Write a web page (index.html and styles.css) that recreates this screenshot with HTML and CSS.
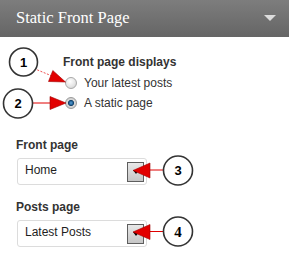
FILE: index.html
```html
<!DOCTYPE html>
<html>
<head>
<meta charset="utf-8">
<link rel="stylesheet" href="styles.css">
</head>
<body>
<div class="page">
  <header class="head">
    <h1 class="title">Static Front Page</h1>
    <span class="caret"></span>
  </header>
  <main class="content">
    <div class="group">
      <div class="group-title">Front page displays</div>
      <div class="options">
        <div class="radio-row"><span class="radio"></span><span>Your latest posts</span></div>
        <div class="radio-row"><span class="radio checked"></span><span>A static page</span></div>
      </div>
    </div>
    <div class="field field-front">
      <div class="label">Front page</div>
      <div class="select"><span class="value">Home</span><span class="btn"></span></div>
    </div>
    <div class="field field-posts">
      <div class="label">Posts page</div>
      <div class="select"><span class="value">Latest Posts</span><span class="btn"></span></div>
    </div>
  </main>
  <svg class="notes" width="289" height="271" viewBox="0 0 289 271">
    <!-- callout 1 -->
    <line x1="34" y1="68.5" x2="52" y2="76" class="lead dotted"/>
    <polygon points="65.5,82 48.5,81.5 52.8,70.5" class="head-arrow"/>
    <circle cx="23.5" cy="62" r="14" class="bubble"/>
    <text x="23.5" y="66.7" class="num">1</text>
    <!-- callout 2 -->
    <line x1="32.5" y1="103" x2="51" y2="103" class="lead"/>
    <polygon points="66,103 50,96.5 50,109.5" class="head-arrow"/>
    <circle cx="18" cy="103.5" r="14.5" class="bubble"/>
    <text x="18" y="108.2" class="num">2</text>
    <!-- callout 3 -->
    <line x1="149" y1="170" x2="164" y2="170" class="lead"/>
    <polygon points="133,170.5 150,163 150,178" class="head-arrow"/>
    <circle cx="178" cy="170.5" r="14.5" class="bubble"/>
    <text x="178" y="175.2" class="num">3</text>
    <!-- callout 4 -->
    <line x1="149" y1="231.5" x2="164" y2="231.5" class="lead"/>
    <polygon points="133,232 150,224.5 150,239.5" class="head-arrow"/>
    <circle cx="178" cy="231.5" r="14.5" class="bubble"/>
    <text x="178" y="236.5" class="num serif">4</text>
  </svg>
</div>
</body>
</html>
```

FILE: styles.css
```css
html, body {
  margin: 0;
  padding: 0;
  background: #ffffff;
}

body {
  font-family: "Liberation Sans", Arial, sans-serif;
  color: #333333;
}

.page {
  position: relative;
  width: 289px;
  height: 271px;
  overflow: hidden;
  background: #ffffff;
}

.head {
  box-sizing: border-box;
  height: 37px;
  padding: 9px 13px 0 16px;
  display: flex;
  justify-content: space-between;
  align-items: flex-start;
  background: linear-gradient(#7d7d7d, #656565);
}

.title {
  margin: 0;
  font-family: "Liberation Serif", "Times New Roman", serif;
  font-weight: normal;
  font-size: 16.5px;
  line-height: 18px;
  color: #ffffff;
}

.caret {
  width: 0;
  height: 0;
  margin-top: 6px;
  border-left: 6.5px solid transparent;
  border-right: 6.5px solid transparent;
  border-top: 6px solid #dcdcdc;
}

.content {
  padding: 18px 0 0 16px;
}

.group {
  margin-left: 47px;
}

.group-title,
.label {
  font-size: 12px;
  line-height: 14px;
  font-weight: bold;
  color: #333333;
}

.options {
  margin-top: 4px;
}

.radio-row {
  display: flex;
  align-items: center;
  height: 20px;
  font-size: 12px;
  line-height: 20px;
  color: #333333;
}

.radio {
  box-sizing: border-box;
  width: 12px;
  height: 12px;
  margin-left: 1.5px;
  margin-right: 7.5px;
  border-radius: 50%;
  border: 1px solid #a9a9a9;
  background: radial-gradient(circle at 40% 35%, #ffffff 0%, #e6e6e6 55%, #c9c9c9 100%);
}

.radio.checked {
  border-color: #9a9a9a;
  background: radial-gradient(circle at 50% 50%, #5aa0d6 0%, #1f5f93 28%, #123f66 38%, #d8d8d8 48%, #c4c4c4 100%);
}

.field-front {
  margin-top: 25px;
}

.field-posts {
  margin-top: 15px;
}

.label {
  margin-bottom: 6px;
}

.select {
  box-sizing: border-box;
  width: 130px;
  height: 27px;
  margin-left: 1px;
  padding: 0 2px 0 7px;
  display: flex;
  align-items: center;
  justify-content: space-between;
  border: 1px solid #dcdcdc;
  border-radius: 3px;
  background: #ffffff;
}

.value {
  font-size: 12px;
  line-height: 14px;
  margin-bottom: 3px;
  color: #1e1e1e;
}

.btn {
  box-sizing: border-box;
  width: 17px;
  height: 20px;
  display: flex;
  align-items: center;
  justify-content: center;
  border: 1px solid #5e5e5e;
  background: linear-gradient(#e8e8e8, #c6c6c6);
}

.btn::after {
  content: "";
  width: 0;
  height: 0;
  border-left: 3.5px solid transparent;
  border-right: 3.5px solid transparent;
  border-top: 4px solid #000000;
}

.notes {
  position: absolute;
  left: 0;
  top: 0;
  pointer-events: none;
}

.lead {
  stroke: #e00000;
  stroke-width: 1;
}

.lead.dotted {
  stroke: #f05050;
  stroke-dasharray: 2 1.5;
}

.head-arrow {
  fill: #e20000;
  stroke: #a00000;
  stroke-width: 0.6;
  stroke-linejoin: round;
}

.bubble {
  fill: #ffffff;
  stroke: #333333;
  stroke-width: 1.6;
}

.num {
  font-family: "Liberation Sans", Arial, sans-serif;
  font-weight: bold;
  font-size: 13px;
  fill: #000000;
  text-anchor: middle;
}

.num.serif {
  font-family: "Liberation Serif", "Times New Roman", serif;
  font-size: 15px;
}
```
